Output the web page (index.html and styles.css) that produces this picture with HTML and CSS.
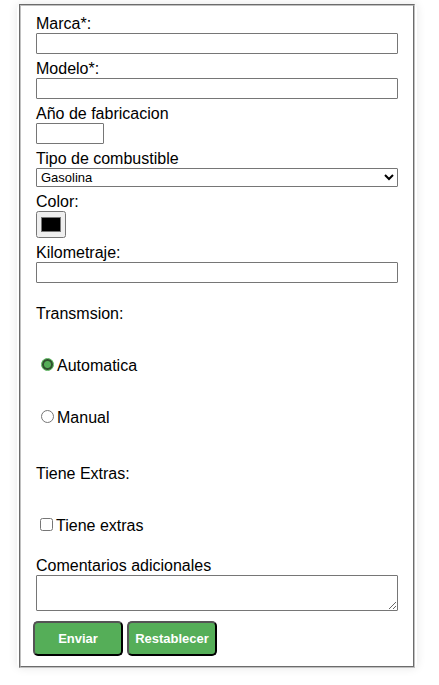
FILE: index.html
```html
<!DOCTYPE html>
<html lang="es">
<head>
<meta charset="utf-8">
<meta name="viewport" content="width=device-width, initial-scale=1">
<title>Formulario de vehículo</title>
<link rel="stylesheet" href="styles.css">
</head>
<body>
<form class="car-form">
  <fieldset class="panel">
    <div class="field">
      <label for="marca">Marca*:</label>
      <input class="text-input" type="text" id="marca" name="marca">
    </div>
    <div class="field">
      <label for="modelo">Modelo*:</label>
      <input class="text-input" type="text" id="modelo" name="modelo">
    </div>
    <div class="field">
      <label for="anio">Año de fabricacion</label>
      <input class="text-input year-input" type="number" id="anio" name="anio">
    </div>
    <div class="field">
      <label for="combustible">Tipo de combustible</label>
      <select class="select" id="combustible" name="combustible">
        <option>Gasolina</option>
      </select>
    </div>
    <div class="field">
      <label for="color">Color:</label>
      <input class="color-input" type="color" id="color" name="color" value="#000000">
    </div>
    <div class="field">
      <label for="km">Kilometraje:</label>
      <input class="text-input" type="text" id="km" name="km">
    </div>
    <div class="group" role="radiogroup" aria-labelledby="transmision">
      <p class="group-title" id="transmision">Transmsion:</p>
      <label class="choice"><input class="radio" type="radio" name="transmision" checked>Automatica</label>
      <label class="choice"><input class="radio" type="radio" name="transmision">Manual</label>
    </div>
    <div class="group extras" role="group" aria-labelledby="extras">
      <p class="group-title" id="extras">Tiene Extras:</p>
      <label class="choice"><input class="checkbox" type="checkbox" name="extras">Tiene extras</label>
    </div>
    <div class="field comments">
      <label for="comentarios">Comentarios adicionales</label>
      <textarea class="textarea" id="comentarios" name="comentarios" rows="2"></textarea>
    </div>
    <div class="actions">
      <button class="button" type="submit">Enviar</button>
      <button class="button" type="reset">Restablecer</button>
    </div>
  </fieldset>
</form>
</body>
</html>
```

FILE: styles.css
```css
* {
  box-sizing: border-box;
}

body {
  margin: 0;
  padding: 4px 22px 16px 17px;
  background: #fff;
  color: #000;
  font: 16px/18px "Liberation Sans", Arial, sans-serif;
}

.car-form {
  max-width: 400px;
  margin: 0 auto;
  border-radius: 5px;
  box-shadow: 0 0 10px rgba(0, 0, 0, 0.1);
  background: #fff;
}

.panel {
  min-width: 0;
  margin: 0 2px;
  padding: 9px 15px 10px;
  border: 2px groove #c0c0c0;
}

.field {
  display: flex;
  flex-direction: column;
  align-items: flex-start;
  margin-bottom: 6px;
}

.text-input,
.select,
.textarea {
  width: 100%;
  margin: 0;
  border: 1px solid #767676;
  border-radius: 1px;
  background: #fff;
  color: #000;
  font: 13px/15px "Liberation Sans", Arial, sans-serif;
}

.text-input {
  height: 21px;
  padding: 1px 2px;
}

.year-input {
  width: 68px;
}

.select {
  height: 19px;
}

.color-input {
  width: 30px;
  height: 27px;
  margin: 0;
  padding: 1px 2px;
}

.textarea {
  height: 36px;
  padding: 2px;
  resize: both;
}

.group {
  display: flex;
  flex-direction: column;
  align-items: flex-start;
  gap: 34px;
  padding-top: 16px;
}

.group-title {
  margin: 0;
}

.choice {
  display: flex;
  align-items: center;
}

.radio {
  width: 13px;
  height: 13px;
  margin: 0 3px 3px 5px;
}

.radio:checked {
  appearance: none;
  border: 1px solid #55ae58;
  border-radius: 50%;
  background: radial-gradient(circle, #55ae58 0 3px, #31502f 4px 5px, #55ae58 6px);
}

.checkbox {
  width: 13px;
  height: 13px;
  margin: 0 3px 3px 4px;
}

.extras {
  padding-top: 38px;
}

.comments {
  padding-top: 22px;
}

.actions {
  display: flex;
  gap: 4px;
  margin: 10px -3px 0;
}

.button {
  width: 90px;
  height: 35px;
  padding: 0;
  border: 2px outset #000;
  border-radius: 5px;
  background: #55ae58;
  color: #fff;
  font: bold 13px/15px "Liberation Sans", Arial, sans-serif;
}
```
